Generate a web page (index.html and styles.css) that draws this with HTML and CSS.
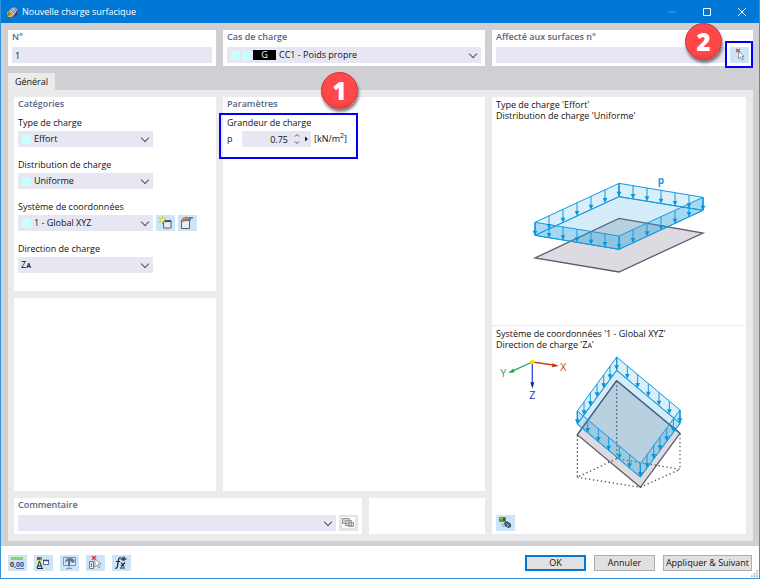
FILE: index.html
```html
<!DOCTYPE html>
<html lang="fr">
<head>
    <meta charset="UTF-8">
    <meta name="viewport" content="width=device-width, initial-scale=1.0">
    <title>Nouvelle charge surfacique</title>
    <link rel="stylesheet" href="styles.css">
</head>
<body>
<div class="window">
    <header class="titlebar">
        <svg class="app-icon" viewBox="0 0 12 12" aria-hidden="true">
            <path d="M2 4 6 1l5 2-1 5-5 3z" fill="#8792a8"/>
            <path d="M3 4l5 5M5 2l5 5M8 1.500 3 7M10 4 5 10" stroke="#d8dce6" stroke-width=".7"/>
            <path d="M6 11 11 3l-1 6z" fill="#343c50"/>
            <path d="M0 6l3-1 2 2v4H1z" fill="#e2b51b"/>
            <path d="M1 8h3M2 6v4" stroke="#5d531c" stroke-width=".7"/>
        </svg>
        <h1>Nouvelle charge surfacique</h1>
        <div class="window-buttons">
            <button type="button" aria-label="Réduire" disabled><svg viewBox="0 0 10 10"><path d="M1 5h8"/></svg></button>
            <button type="button" aria-label="Agrandir"><svg viewBox="0 0 10 10"><path d="M1.500 1.500h7v7h-7z"/></svg></button>
            <button type="button" aria-label="Fermer"><svg viewBox="0 0 10 10"><path d="M1 1l8 8M9 1l-8 8"/></svg></button>
        </div>
    </header>

    <main class="workspace">
        <div class="top-row">
            <div class="panel">
                <label class="panel-title" for="number">N°</label>
                <input class="field" id="number" type="text" value="1">
            </div>
            <div class="panel">
                <label class="panel-title" for="loadCase">Cas de charge</label>
                <div class="combo">
                    <select class="field case-field" id="loadCase"><option>CC1 - Poids propre</option></select>
                    <span class="case-tags"><i class="swatch"></i><i class="swatch"></i><b class="tag">G</b></span>
                </div>
            </div>
            <div class="panel">
                <label class="panel-title" for="surfaces">Affecté aux surfaces n°</label>
                <div class="field-row">
                    <input class="field" id="surfaces" type="text">
                    <div class="callout pick-callout">
                        <button class="icon-button" type="button" aria-label="Sélectionner">
                            <svg viewBox="0 0 19 16"><path d="M6 2l4 3M10 2 6 5" stroke="#d63b45" stroke-width="1.300"/><path d="M8.500 4.500v7l2-1.500 1.500 3 1.500-.8-1.500-2.700h2z" fill="#fff" stroke="#777c83" stroke-width=".8"/></svg>
                        </button>
                        <span class="badge">2</span>
                    </div>
                </div>
            </div>
        </div>

        <nav class="tabs"><button class="tab" type="button">Général</button></nav>

        <div class="tab-page">
            <section class="panel categories">
                <h2 class="panel-title">Catégories</h2>
                <div class="group">
                    <label for="loadType">Type de charge</label>
                    <div class="combo">
                        <select class="field swatch-field" id="loadType"><option>Effort</option></select>
                        <i class="swatch"></i>
                    </div>
                </div>
                <div class="group">
                    <label for="distribution">Distribution de charge</label>
                    <div class="combo">
                        <select class="field swatch-field" id="distribution"><option>Uniforme</option></select>
                        <i class="swatch"></i>
                    </div>
                </div>
                <div class="group">
                    <label for="system">Système de coordonnées</label>
                    <div class="field-row">
                        <div class="combo">
                            <select class="field swatch-field" id="system"><option>1 - Global XYZ</option></select>
                            <i class="swatch"></i>
                        </div>
                        <button class="icon-button" type="button" aria-label="Nouveau système">
                            <svg viewBox="0 0 19 16"><path d="M7.500 5.500h7.500v7.500H7.500z" fill="#e9edf1" stroke="#59606b"/><path d="M8 6.300h7" stroke="#2949a2" stroke-width="1.600"/><path d="M6.500 1v8M3 2.500l7 5M10 2.500l-7 5" stroke="#a6a43c" stroke-width=".8"/><circle cx="6.500" cy="5" r="2" fill="#fff01f"/></svg>
                        </button>
                        <button class="icon-button" type="button" aria-label="Modifier le système">
                            <svg viewBox="0 0 19 16"><path d="M3.500 5.500h8v8h-8z" fill="#e9edf1" stroke="#59606b"/><path d="M3 6.500 5 3l4-1 3 1.500-1 2-3-.5-2 1.500z" fill="#b98567" stroke="#775b50" stroke-width=".5"/><path d="M11 2h4v1.500h-2v2h-2z" fill="#4d7eaf"/></svg>
                        </button>
                    </div>
                </div>
                <div class="group">
                    <label for="direction">Direction de charge</label>
                    <div class="combo">
                        <select class="field" id="direction"><option>Zᴀ</option></select>
                    </div>
                </div>
            </section>

            <section class="panel blank"></section>

            <section class="panel params">
                <h2 class="panel-title">Paramètres</h2>
                <div class="callout load-callout">
                    <h3>Grandeur de charge</h3>
                    <div class="load-row">
                        <label for="magnitude">p</label>
                        <div class="spinner">
                            <input class="field" id="magnitude" type="text" value="0.75">
                            <svg viewBox="0 0 24 16" aria-hidden="true"><path d="M8 5.500 10 3.500l2 2M8 10.500l2 2 2-2" fill="none" stroke="#555"/><path d="M18 5.500v5l3-2.500z" fill="#222"/></svg>
                        </div>
                        <span class="unit">[kN/m<sup>2</sup>]</span>
                    </div>
                    <span class="badge">1</span>
                </div>
            </section>

            <section class="panel comment">
                <label class="panel-title" for="comment">Commentaire</label>
                <div class="field-row">
                    <div class="combo"><select class="field" id="comment"><option></option></select></div>
                    <button class="icon-button muted" type="button" aria-label="Commentaires" disabled>
                        <svg viewBox="0 0 19 16"><path d="M3 2h13v11H3z" fill="#fff"/><path d="M3.500 3.500h7v5h-7zM6.500 5.500h6v5h-6zM9.500 7.500h5v4h-5z" fill="#d4d4d4" stroke="#999"/></svg>
                    </button>
                </div>
            </section>

            <section class="panel extra"></section>

            <section class="panel preview">
                <figure class="sketch">
                    <figcaption>Type de charge 'Effort'<br>Distribution de charge 'Uniforme'</figcaption>
                    <svg viewBox="-84 -132 762 600" role="img" aria-label="Charge uniforme p">
                        <defs>
                            <g id="arrow"><path d="M0 0v30" stroke="#149bdd" stroke-width="3"/><path d="M-7 25H7L0 40z" fill="#0795dd"/></g>
                        </defs>
                        <path class="surface" d="M297 160 549 204 297 321 45 279z"/>
                        <path class="load-top" d="M297 95 549 136 297 253 45 211z"/>
                        <path class="load-side" d="M45 172 297 55v40L45 211zM297 55l252 42v39L297 95z"/>
                        <path class="load-side front" d="M45 172l252 41v40L45 211zM297 213 549 97v39L297 253z"/>
                        <use href="#arrow" x="45" y="172"/><use href="#arrow" x="87" y="152"/><use href="#arrow" x="129" y="133"/><use href="#arrow" x="171" y="113"/><use href="#arrow" x="213" y="94"/><use href="#arrow" x="255" y="74"/><use href="#arrow" x="297" y="55"/>
                        <use href="#arrow" x="339" y="62"/><use href="#arrow" x="381" y="69"/><use href="#arrow" x="423" y="76"/><use href="#arrow" x="465" y="83"/><use href="#arrow" x="507" y="90"/><use href="#arrow" x="549" y="97"/>
                        <use href="#arrow" x="87" y="179"/><use href="#arrow" x="129" y="186"/><use href="#arrow" x="171" y="192"/><use href="#arrow" x="213" y="199"/><use href="#arrow" x="255" y="206"/><use href="#arrow" x="297" y="213"/>
                        <use href="#arrow" x="339" y="194"/><use href="#arrow" x="381" y="174"/><use href="#arrow" x="423" y="155"/><use href="#arrow" x="465" y="136"/><use href="#arrow" x="507" y="116"/>
                        <text class="load-name" x="413" y="56">p</text>
                    </svg>
                </figure>
                <figure class="sketch">
                    <figcaption>Système de coordonnées '1 - Global XYZ'<br>Direction de charge 'Z<small>A</small>'</figcaption>
                    <svg viewBox="21 87 762 480" role="img" aria-label="Direction Z">
                        <g class="axes">
                            <path d="M142 120 205 129" stroke="#d64016"/><path d="M221 132l-20 4 2-12z" fill="#c83210"/>
                            <path d="M142 120 85 146" stroke="#27ac57"/><path d="M70 153l14-13 5 11z" fill="#119d47"/>
                            <path d="M142 120v65" stroke="#3b51c3"/><path d="M142 200l-6-19h12z" fill="#0f2bb0"/>
                            <circle cx="142" cy="120" r="7" fill="#ffd800"/>
                            <text x="226" y="146" fill="#d23a16">X</text>
                            <text x="46" y="166" fill="#20a850">Y</text>
                            <text x="133" y="230" fill="#1833b8">Z</text>
                        </g>
                        <path class="surface" d="M395 176 585 334 466 496 277 338z"/>
                        <path class="dotted" d="M277 340v126l118-56 190 32-119 54-189-30M585 336v106M395 178v232"/>
                        <path class="load-top" d="M395 145 585 304 466 465 277 306z"/>
                        <path class="load-side" d="M277 267 395 105v40L277 306zM395 105l190 159v40L395 145z"/>
                        <path class="load-side" d="M277 267l189 158v40L277 306zM466 425 585 264v40L466 465z"/>
                        <path class="outline" d="M395 176 585 334M395 176 277 338"/>
                        <use href="#arrow" x="277" y="267"/><use href="#arrow" x="297" y="240"/><use href="#arrow" x="316" y="213"/><use href="#arrow" x="336" y="186"/><use href="#arrow" x="356" y="159"/><use href="#arrow" x="375" y="132"/><use href="#arrow" x="395" y="105"/>
                        <use href="#arrow" x="427" y="131"/><use href="#arrow" x="458" y="158"/><use href="#arrow" x="490" y="184"/><use href="#arrow" x="522" y="211"/><use href="#arrow" x="553" y="237"/><use href="#arrow" x="585" y="264"/>
                        <use href="#arrow" x="308" y="293"/><use href="#arrow" x="340" y="320"/><use href="#arrow" x="371" y="346"/><use href="#arrow" x="403" y="372"/><use href="#arrow" x="434" y="399"/><use href="#arrow" x="466" y="425"/>
                        <use href="#arrow" x="486" y="398"/><use href="#arrow" x="506" y="371"/><use href="#arrow" x="525" y="345"/><use href="#arrow" x="545" y="318"/><use href="#arrow" x="565" y="291"/>
                    </svg>
                </figure>
                <button class="icon-button" type="button" aria-label="Image">
                    <svg viewBox="0 0 19 16"><path d="M3 2h7v5H3z" fill="#4f9e48"/><path d="M4 3h2v1H4z" fill="#e8cf39"/><path d="M7 3h2v3H7z" fill="#2d6931"/><path d="M5 8h4v4H6z" fill="#b8bec6"/><path d="M8 8l3-2 4 3v3l-3 1-3-2z" fill="#3b5372"/><path d="M10 9l3 1-2 2" fill="none" stroke="#93b0d6"/></svg>
                </button>
            </section>
        </div>
    </main>

    <footer class="footer">
        <div class="tools">
            <button class="icon-button" type="button" aria-label="Unités">
                <svg viewBox="0 0 19 16"><path d="M3 2h12v3H3z" fill="#8cd65c"/><text x="2" y="12" font-size="7" font-weight="700" fill="#333">0,<tspan fill="#24509a" text-decoration="underline">00</tspan></text></svg>
            </button>
            <button class="icon-button" type="button" aria-label="Affichage">
                <svg viewBox="0 0 19 16"><path d="M3 2h3v3H3z" fill="#d33"/><path d="M6 2h2v3H6z" fill="#38ac48"/><path d="M3 5h5v1H3z" fill="#e8d72c"/><path d="M3 13 5.500 6 8 13M4 11h3M3 13.500h6" fill="none" stroke="#222"/><path d="M9.500 5.500h5v4h-5z" fill="#fff" stroke="#667"/><path d="M9 5.500h6" stroke="#2949a2" stroke-width="1.500"/></svg>
            </button>
            <button class="icon-button" type="button" aria-label="Vue">
                <svg viewBox="0 0 19 16"><path d="M3.500 2.500h12v8h-12zM9 11v2M6 13.500h6" fill="#d7e5ef" stroke="#8196a8"/><path d="M5 8q0-5 5-5 4 0 5 4l-3 1-1-2-1 1v4H8V6Q6 6 5 8z" fill="#5878a1"/></svg>
            </button>
            <button class="icon-button" type="button" aria-label="Sélection">
                <svg viewBox="0 0 19 16"><path d="M6 1l4 4M10 1 6 5" stroke="#e02b30" stroke-width="1.300"/><path d="M3.500 6.500h4v7h-4zM5.500 8v4" fill="#eee" stroke="#777"/><path d="M9 4v8l2-2 2 3 1-1-2-3h3z" fill="#fff" stroke="#888" stroke-width=".8"/></svg>
            </button>
            <button class="icon-button" type="button" aria-label="Formule">
                <svg viewBox="0 0 19 16"><path d="M9 3q-2-1-2.500 2l-1 6q-.5 3-2.500 2M4 6.500h4M9 7.500l3 4M13 7.500l-4 4M8 13h5" fill="none" stroke="#222" stroke-width="1.200"/><path d="M8.500 4q3-4 6 0-3 3-6 0z" fill="#d9e1f4" stroke="#435180"/><circle cx="11.500" cy="4" r="1.500" fill="#27366e"/></svg>
            </button>
        </div>
        <div class="actions">
            <button class="action primary" type="button">OK</button>
            <button class="action" type="button">Annuler</button>
            <button class="action wide" type="button">Appliquer &amp; Suivant</button>
        </div>
        <svg class="grip" viewBox="0 0 8 8" aria-hidden="true"><path d="M6 0h2v2H6zM3 3h2v2H3zM6 3h2v2H6zM0 6h2v2H0zM3 6h2v2H3zM6 6h2v2H6z" fill="#bbb"/></svg>
    </footer>
</div>
</body>
</html>
```
FILE: styles.css
```css
:root {
    --blue: #0078d7;
    --field: #e7e7f3;
    --icon: #cce4f7;
    --heading: #556788;
    --load: #149bdd;
    --swatch: #c8ffff;
}

* {
    box-sizing: border-box;
    margin: 0;
    padding: 0;
}

body {
    font-family: "Open Sans", "Noto Sans", sans-serif;
    font-size: 9px;
    line-height: 10px;
    font-weight: 500;
    color: #111;
}

button,
input,
select {
    font: inherit;
    color: inherit;
    border: 0;
    border-radius: 0;
}

.window {
    display: flex;
    flex-direction: column;
    min-height: 100vh;
    border: 1px solid #3393df;
    border-top: 0;
    background: #fff;
}

/* title bar */
.titlebar {
    display: flex;
    align-items: center;
    height: 23px;
    padding-left: 6px;
    gap: 3px;
    background: var(--blue);
    color: #fff;
}

.app-icon {
    width: 12px;
    height: 12px;
}

h1 {
    flex: 1;
    font-size: 9px;
    font-weight: 500;
}

.window-buttons {
    display: flex;
}

.window-buttons button {
    display: flex;
    align-items: center;
    justify-content: center;
    width: 35px;
    height: 23px;
    background: none;
}

.window-buttons button:disabled {
    opacity: 0.3;
}

.window-buttons svg {
    width: 10px;
    height: 10px;
    fill: none;
    stroke: #fff;
}

/* panels */
.workspace {
    display: flex;
    flex-direction: column;
    flex: 1;
    padding: 7px 6px 5px 7px;
    background: #d0cfd4;
}

.top-row {
    display: grid;
    grid-template-columns: 208fr 262fr 261fr;
    gap: 7px;
    margin-bottom: 7px;
}

.panel {
    min-width: 0;
    padding: 2px 4px 3px;
    background: #fff;
}

.panel-title {
    display: block;
    margin-bottom: 5px;
    font-size: 9px;
    font-weight: 600;
    color: var(--heading);
}

.field {
    display: block;
    width: 100%;
    height: 16px;
    padding: 0 3px;
    appearance: none;
    background: var(--field);
    outline: 0;
}

.field-row {
    display: flex;
    gap: 3px;
}

.combo {
    position: relative;
    flex: 1;
}

.combo::after {
    content: "";
    position: absolute;
    top: 4px;
    right: 5px;
    width: 5px;
    height: 5px;
    border: solid #555;
    border-width: 0 1px 1px 0;
    transform: rotate(45deg);
    pointer-events: none;
}

.swatch {
    width: 9px;
    height: 9px;
    background: var(--swatch);
}

.combo > .swatch {
    position: absolute;
    top: 4px;
    left: 4px;
    pointer-events: none;
}

.swatch-field {
    padding-left: 16px;
}

.case-field {
    padding-left: 52px;
}

.case-tags {
    position: absolute;
    top: 3px;
    left: 4px;
    display: flex;
    align-items: center;
    gap: 2px;
    pointer-events: none;
}

.tag {
    width: 23px;
    background: #000;
    color: #fff;
    font-weight: 400;
    text-align: center;
}

.icon-button {
    display: block;
    flex: none;
    width: 19px;
    height: 16px;
    background: var(--icon);
}

.icon-button svg {
    display: block;
    width: 19px;
    height: 16px;
    fill: none;
}

.icon-button.muted {
    background: #e4e4e4;
}

/* numbered callouts */
.callout {
    position: relative;
}

.callout::after {
    content: "";
    position: absolute;
    border: 2px solid #00f;
    pointer-events: none;
}

.badge {
    position: absolute;
    z-index: 1;
    width: 37px;
    height: 37px;
    border: 1px solid #c5303a;
    border-radius: 50%;
    background: radial-gradient(circle at 50% 35%, #ff4848 60%, #e2363a);
    box-shadow: 1px 3px 3px rgba(0, 0, 0, 0.5);
    color: #fff;
    font-size: 24px;
    font-weight: 800;
    line-height: 35px;
    text-align: center;
}

.pick-callout::after {
    inset: -6px -4px -5px -5px;
}

.pick-callout .badge {
    top: -24px;
    left: -45px;
}

.load-callout {
    width: 120px;
    height: 29px;
}

.load-callout::after {
    inset: -5px -11px -12px -8px;
}

.load-callout .badge {
    top: -46px;
    left: 94px;
}

/* tab page */
.tabs {
    display: flex;
}

.tab {
    width: 47px;
    height: 17px;
    background: #ebebeb;
}

.tab-page {
    display: grid;
    flex: 1;
    grid-template-columns: 202fr 139fr 116fr 254fr;
    grid-template-rows: 194px 1fr 36px;
    gap: 7px;
    padding: 7px 7px 7px 6px;
    background: #ebebeb;
}

.categories .panel-title {
    margin-bottom: 9px;
}

.group {
    display: grid;
    gap: 3px;
    margin-bottom: 13px;
}

.group .combo {
    flex: none;
    width: 135px;
}

.blank {
    grid-area: 2 / 1;
}

.params {
    grid-area: 1 / 2 / 3 / 4;
}

.params .panel-title {
    margin-bottom: 9px;
}

h3 {
    margin-bottom: 3px;
    font-size: 9px;
    font-weight: 500;
}

.load-row {
    display: flex;
    align-items: center;
}

.load-row label {
    flex: none;
    width: 15px;
}

.spinner {
    position: relative;
    flex: none;
    width: 69px;
}

.spinner .field {
    padding-right: 23px;
    text-align: right;
}

.spinner svg {
    position: absolute;
    top: 0;
    right: 0;
    width: 24px;
    height: 16px;
}

.unit {
    margin-left: 3px;
    white-space: nowrap;
}

sup {
    font-size: 7px;
    line-height: 0;
}

.comment {
    grid-area: 3 / 1 / 4 / 3;
}

.comment .panel-title {
    margin-bottom: 5px;
}

.extra {
    grid-area: 3 / 3;
}

.preview {
    grid-area: 1 / 4 / 4 / 5;
    display: flex;
    flex-direction: column;
    justify-content: space-between;
    padding: 2px 0 3px;
}

.preview .icon-button {
    margin-left: 4px;
}

.sketch + .sketch {
    padding-top: 2px;
    border-top: 1px solid #ebebeb;
}

figcaption {
    padding-left: 4px;
    line-height: 11px;
}

figcaption small {
    font-size: 7px;
}

.sketch svg {
    display: block;
    width: 100%;
}

.surface {
    fill: #dddbe1;
    stroke: #625c6c;
    stroke-width: 4;
}

.outline {
    fill: none;
    stroke: #48688a;
    stroke-width: 4;
}

.dotted {
    fill: none;
    stroke: #555061;
    stroke-width: 4;
    stroke-dasharray: 4 8;
}

.load-top {
    fill: rgba(45, 165, 220, 0.2);
    stroke: var(--load);
    stroke-width: 3;
}

.load-side {
    fill: rgba(45, 165, 220, 0.18);
    stroke: var(--load);
    stroke-width: 3;
}

.load-side.front {
    fill: rgba(20, 155, 221, 0.25);
}

.load-name {
    fill: var(--load);
    font-size: 30px;
    font-weight: 700;
}

.axes {
    font-size: 32px;
    stroke-width: 4;
}

.axes text {
    stroke: none;
}

/* footer */
.footer {
    position: relative;
    display: flex;
    align-items: center;
    justify-content: space-between;
    height: 32px;
    padding: 1px 7px 0;
}

.tools {
    display: flex;
    gap: 7px;
}

.actions {
    display: flex;
    gap: 8px;
}

.action {
    width: 61px;
    height: 16px;
    border: 1px solid #adadad;
    background: #e1e1e1;
    white-space: nowrap;
}

.action.primary {
    border: 2px solid var(--blue);
}

.action.wide {
    width: 89px;
}

.grip {
    position: absolute;
    right: 1px;
    bottom: 1px;
    width: 7px;
    height: 7px;
}
```
